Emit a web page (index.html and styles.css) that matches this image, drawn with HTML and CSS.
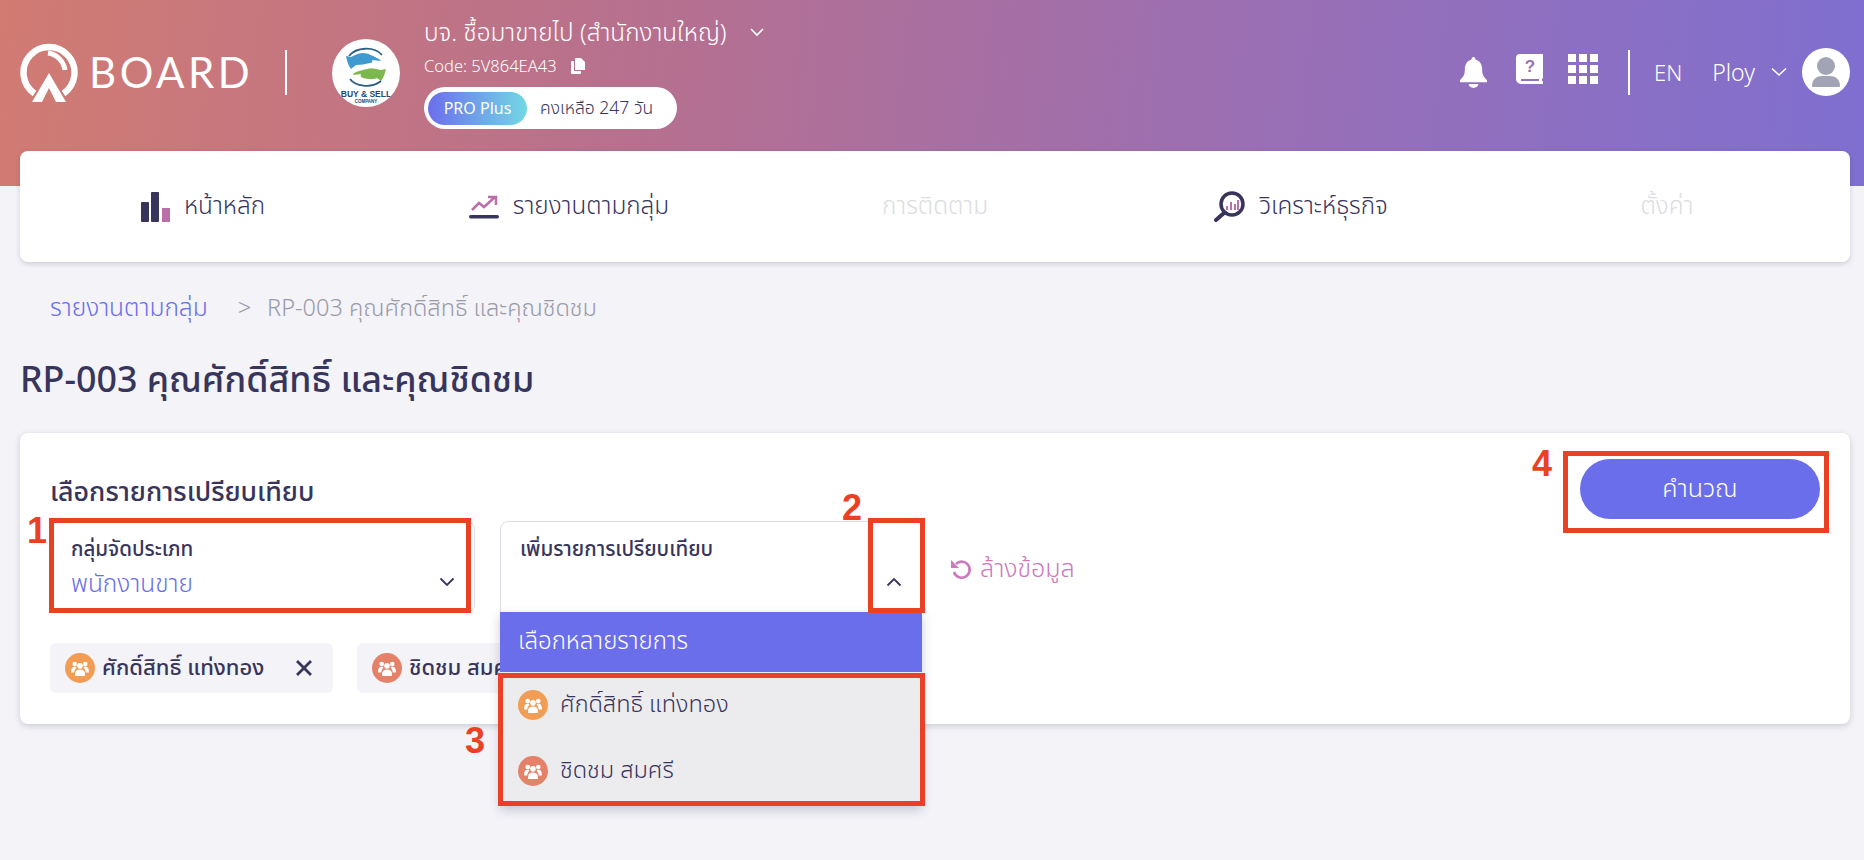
FILE: index.html
```html
<!DOCTYPE html>
<html lang="th">
<head>
<meta charset="utf-8">
<title>RP-003</title>
<link rel="stylesheet" href="styles.css">
</head>
<body>
<div class="page">
  <header class="topbar">
    <div class="brand">
      <svg class="brand-mark" viewBox="0 0 58 60" fill="none"><path d="M14.500 51.500A25.500 25.500 0 1 1 43.500 51.500" stroke="#fff" stroke-width="6.500"/><path d="M29 11a20 20 0 0 1 17 17" stroke="#fff" stroke-width="5" transform="translate(-1 0)"/><path d="M29 31L12 60h10l7-14 7 14h10z" fill="#fff"/></svg>
      <span class="brand-name">BOARD</span>
    </div>
    <span class="vline vline-brand"></span>
    <div class="company-logo">
      <svg viewBox="0 0 68 68"><path d="M17 17C24 8 42 7 50 16" fill="none" stroke="#2c5f86" stroke-width="1.800"/><path d="M14 17l5 1c4-2 8-4 12-4 5 0 10 3 16 6l2 2-9-1c1 2 0 3-2 3-5 1-9 2-14 2l-5 4c-3-4-4-8-5-13z" fill="#3f9ad0"/><path d="M54 30l-5 1c-5-1-9-2-14-1-5 1-9 2-13 4l-1 2 8-1c-1 2 0 3 2 4 5 1 10 2 14 0l4 3c3-4 4-8 5-12z" fill="#7cb84e"/><path d="M18 40c5 7 21 10 31 2" fill="none" stroke="#2c5f86" stroke-width="1.800"/><text x="34" y="58" class="logo-big">BUY &amp; SELL</text><text x="34" y="64" class="logo-small">COMPANY</text></svg>
    </div>
    <div class="company">
      <div class="company-name"><span>บจ. ชื้อมาขายไป (สำนักงานใหญ่)</span>
        <svg class="chev-sm" viewBox="0 0 16 10" fill="none"><path d="M2 2l6 6 6-6" stroke="#fff" stroke-width="1.600"/></svg>
      </div>
      <div class="company-code"><span>Code: 5V864EA43</span>
        <svg class="copy-ic" viewBox="0 0 14 16"><path d="M5 0h5l4 4v8H4V1a1 1 0 0 1 1-1z" fill="#fff"/><path d="M1 3h2v10h7v2a1 1 0 0 1-1 1H1a1 1 0 0 1-1-1V4a1 1 0 0 1 1-1z" fill="#fff"/></svg>
      </div>
      <div class="plan"><span class="plan-tag">PRO Plus</span><span class="plan-left">คงเหลือ 247 วัน</span></div>
    </div>
    <div class="top-actions">
      <svg class="ic-bell" viewBox="0 0 28 32"><path d="M14 0c1.500 0 2 1 2 2.500C21 4 23 8 23 13c0 6 2 8 5 11v2H0v-2c3-3 5-5 5-11 0-5 2-9 7-10.500C12 1 12.500 0 14 0z" fill="#fff"/><path d="M9 28h10a5 4 0 0 1-10 0z" fill="#fff"/></svg>
      <svg class="ic-book" viewBox="0 0 27 30"><path d="M4 0h23v24l-1 1v2h1v3H5a5 5 0 0 1-5-5V4a4 4 0 0 1 4-4z" fill="#fff"/><path d="M5 25h18v2H5z" fill="#9872b6"/><text x="14" y="18" class="book-q">?</text></svg>
      <svg class="ic-grid" viewBox="0 0 30 30" fill="#fff"><rect width="8" height="8"/><rect x="11" width="8" height="8"/><rect x="22" width="8" height="8"/><rect y="11" width="8" height="8"/><rect x="11" y="11" width="8" height="8"/><rect x="22" y="11" width="8" height="8"/><rect y="22" width="8" height="8"/><rect x="11" y="22" width="8" height="8"/><rect x="22" y="22" width="8" height="8"/></svg>
      <span class="vline vline-actions"></span>
      <span class="lang">EN</span>
      <span class="user">Ploy</span>
      <svg class="chev-user" viewBox="0 0 16 10" fill="none"><path d="M1 1.500l7 6.500 7-6.500" stroke="#fff" stroke-width="1.600"/></svg>
      <div class="avatar"><svg viewBox="0 0 48 48"><circle cx="24" cy="18" r="9" fill="#a2a3b4"/><path d="M10 38c0-7 5-10 10-10h8c5 0 10 3 10 10 0 1-1 1-2 1H12c-1 0-2 0-2-1z" fill="#a2a3b4"/></svg></div>
    </div>
  </header>

  <nav class="mainnav">
    <a class="nav-item">
      <svg class="nav-ic-bars" viewBox="0 0 29 30"><rect y="10" width="8" height="20" rx="1" fill="#38355c"/><rect x="10" width="8" height="30" rx="1" fill="#38355c"/><rect x="21" y="16" width="8" height="14" fill="#bb6fa8"/></svg>
      <span>หน้าหลัก</span></a>
    <a class="nav-item">
      <svg class="nav-ic-trend" viewBox="0 0 30 24" fill="none"><path d="M3 15l7-7 5 4 11-10M19 2h8v8" stroke="#bb6fa8" stroke-width="2.500"/><rect y="20" width="30" height="3.500" rx="1.700" fill="#38355c"/></svg>
      <span>รายงานตามกลุ่ม</span></a>
    <a class="nav-item nav-off"><span>การติดตาม</span></a>
    <a class="nav-item">
      <svg class="nav-ic-search" viewBox="0 0 31 31" fill="none"><circle cx="18" cy="13" r="11" stroke="#38355c" stroke-width="3.500"/><path d="M10 22l-8 7" stroke="#38355c" stroke-width="4" stroke-linecap="round"/><path d="M13 15v4M17 11v8M21 13v6M24 9v10" stroke="#bb6fa8" stroke-width="2"/></svg>
      <span>วิเคราะห์ธุรกิจ</span></a>
    <a class="nav-item nav-off"><span>ตั้งค่า</span></a>
  </nav>

  <div class="crumbs"><a class="crumb-link">รายงานตามกลุ่ม</a><span class="crumb-sep">&gt;</span><span class="crumb-now">RP-003 คุณศักดิ์สิทธิ์ และคุณชิดชม</span></div>
  <h1 class="page-title">RP-003 คุณศักดิ์สิทธิ์ และคุณชิดชม</h1>

  <section class="panel">
    <div class="panel-main">
      <h2 class="panel-title">เลือกรายการเปรียบเทียบ</h2>
      <div class="controls">
        <div class="field field-group">
          <div class="field-label">กลุ่มจัดประเภท</div>
          <div class="field-value">พนักงานขาย</div>
          <svg class="field-chev" viewBox="0 0 16 10" fill="none"><path d="M1.500 1.500L8 8l6.500-6.500" stroke="#38355c" stroke-width="1.800"/></svg>
        </div>
        <div class="field field-add">
          <div class="field-label">เพิ่มรายการเปรียบเทียบ</div>
          <svg class="field-chev" viewBox="0 0 16 10" fill="none"><path d="M1.500 8.500L8 2l6.500 6.500" stroke="#38355c" stroke-width="1.800"/></svg>
          <div class="menu">
            <div class="menu-head">เลือกหลายรายการ</div>
            <div class="menu-list">
              <div class="menu-row"><span class="people people-a"><svg viewBox="0 0 20 17" fill="#fff"><circle cx="10" cy="5.500" r="3.200"/><circle cx="4" cy="3.500" r="2.600"/><circle cx="16" cy="3.500" r="2.600"/><path d="M4.500 17v-3c0-3 2-4.500 5.500-4.500s5.500 1.500 5.500 4.500v3z"/><path d="M0 11c0-3 1.500-4.500 4-4.500 1 0 1.500.3 2 1C5 9 3.500 10 3.500 13H0zM20 11c0-3-1.500-4.500-4-4.500-1 0-1.500.3-2 1 1 1.500 2.500 2.500 2.500 5.500H20z"/></svg></span><span>ศักดิ์สิทธิ์ แท่งทอง</span></div>
              <div class="menu-row"><span class="people people-b"><svg viewBox="0 0 20 17" fill="#fff"><circle cx="10" cy="5.500" r="3.200"/><circle cx="4" cy="3.500" r="2.600"/><circle cx="16" cy="3.500" r="2.600"/><path d="M4.500 17v-3c0-3 2-4.500 5.500-4.500s5.500 1.500 5.500 4.500v3z"/><path d="M0 11c0-3 1.500-4.500 4-4.500 1 0 1.500.3 2 1C5 9 3.500 10 3.500 13H0zM20 11c0-3-1.500-4.500-4-4.500-1 0-1.500.3-2 1 1 1.500 2.500 2.500 2.500 5.500H20z"/></svg></span><span>ชิดชม สมศรี</span></div>
            </div>
          </div>
        </div>
        <a class="clear"><svg class="clear-ic" viewBox="0 0 22 22" fill="none"><path d="M6 6a8 8 0 1 1-2 8" stroke="#cc79bd" stroke-width="2.600"/><path d="M1 2v8h8z" fill="#cc79bd"/></svg><span>ล้างข้อมูล</span></a>
      </div>
      <div class="chips">
        <div class="chip"><span class="people people-a"><svg viewBox="0 0 20 17" fill="#fff"><circle cx="10" cy="5.500" r="3.200"/><circle cx="4" cy="3.500" r="2.600"/><circle cx="16" cy="3.500" r="2.600"/><path d="M4.500 17v-3c0-3 2-4.500 5.500-4.500s5.500 1.500 5.500 4.500v3z"/><path d="M0 11c0-3 1.500-4.500 4-4.500 1 0 1.500.3 2 1C5 9 3.500 10 3.500 13H0zM20 11c0-3-1.500-4.500-4-4.500-1 0-1.500.3-2 1 1 1.500 2.500 2.500 2.500 5.500H20z"/></svg></span><span class="chip-text">ศักดิ์สิทธิ์ แท่งทอง</span><svg class="chip-x" viewBox="0 0 18 18" fill="none"><path d="M2 2l14 14M16 2L2 16" stroke="#38355c" stroke-width="2.800"/></svg></div>
        <div class="chip"><span class="people people-b"><svg viewBox="0 0 20 17" fill="#fff"><circle cx="10" cy="5.500" r="3.200"/><circle cx="4" cy="3.500" r="2.600"/><circle cx="16" cy="3.500" r="2.600"/><path d="M4.500 17v-3c0-3 2-4.500 5.500-4.500s5.500 1.500 5.500 4.500v3z"/><path d="M0 11c0-3 1.500-4.500 4-4.500 1 0 1.500.3 2 1C5 9 3.500 10 3.500 13H0zM20 11c0-3-1.500-4.500-4-4.500-1 0-1.500.3-2 1 1 1.500 2.500 2.500 2.500 5.500H20z"/></svg></span><span class="chip-text">ชิดชม สมศรี</span><svg class="chip-x" viewBox="0 0 18 18" fill="none"><path d="M2 2l14 14M16 2L2 16" stroke="#38355c" stroke-width="2.800"/></svg></div>
      </div>
    </div>
    <button class="calc">คำนวณ</button>
  </section>

  <div class="mark mark-box-1"></div>
  <div class="mark mark-box-2"></div>
  <div class="mark mark-box-3"></div>
  <div class="mark mark-box-4"></div>
  <span class="mark-num num-1">1</span>
  <span class="mark-num num-2">2</span>
  <span class="mark-num num-3">3</span>
  <span class="mark-num num-4">4</span>
</div>
</body>
</html>
```
FILE: styles.css
```css
* { box-sizing: border-box; }
html, body { margin: 0; padding: 0; }
body { background: #f3f3f8; color: #38355c; font-family: "Noto Sans", "Noto Sans Thai", sans-serif; font-weight: 300; }
.page { position: relative; width: 1864px; height: 860px; overflow: hidden; }
a { text-decoration: none; color: inherit; }

/* top bar */
.topbar { display: flex; align-items: flex-start; height: 186px; padding: 0 14px 0 20px; color: #fff;
  background: linear-gradient(96deg, #d17b72 0%, #b6708f 35%, #9c6fb2 65%, #7f6fd0 100%); }
.brand { display: flex; align-items: center; margin-top: 42px; width: 230px; }
.brand-mark { width: 58px; height: 60px; flex: none; }
.brand-name { margin-left: 11px; font-family: "Lato", sans-serif; font-weight: 400; font-size: 42px; letter-spacing: 3.500px; line-height: 60px; }
.vline { display: block; width: 2px; height: 45px; background: #fff; flex: none; }
.vline-brand { margin: 50px 0 0 35px; }
.company-logo { width: 68px; height: 68px; margin: 39px 0 0 45px; border-radius: 50%; background: #fff; flex: none; overflow: hidden; }
.company-logo svg { display: block; width: 68px; height: 68px; }
.logo-big { font: 700 8.500px "Liberation Sans", sans-serif; fill: #21497a; text-anchor: middle; }
.logo-small { font: 700 4.500px "Liberation Sans", sans-serif; fill: #21497a; text-anchor: middle; }
.company { margin: 17px 0 0 24px; }
.company-name { display: flex; align-items: center; gap: 22px; font-size: 24.300px; line-height: 30px; height: 30px; }
.chev-sm { width: 16px; height: 10px; }
.company-code { display: flex; align-items: center; gap: 14px; font-size: 16.500px; line-height: 22px; margin-top: 8px; }
.copy-ic { width: 14px; height: 16px; }
.plan { display: flex; align-items: center; width: 253px; height: 42px; margin-top: 10px; padding: 0 4px; background: #fff; border-radius: 21px; color: #38355c; font-size: 17.500px; font-weight: 400; }
.plan-tag { width: 99px; height: 33px; line-height: 33px; font-size: 16px; text-align: center; color: #fff; border-radius: 17px; background: linear-gradient(90deg, #6c6eec, #72d8e4); }
.plan-left { margin-left: 13px; font-weight: 300; }
.top-actions { display: flex; align-items: center; margin: 48px 0 0 auto; height: 48px; }
.ic-bell { width: 27px; height: 31px; }
.ic-book { width: 27px; height: 30px; margin: -6px 0 0 29px; }
.book-q { font: 700 17px "Liberation Sans", sans-serif; fill: #9872b6; text-anchor: middle; }
.ic-grid { width: 30px; height: 30px; margin: -6px 0 0 25px; }
.vline-actions { margin-left: 30px; }
.lang { margin-left: 24px; font-size: 22px; }
.user { margin-left: 30px; font-size: 23px; }
.chev-user { width: 16px; height: 10px; margin-left: 16px; }
.avatar { width: 48px; height: 48px; margin-left: 15px; border-radius: 50%; background: #fff; overflow: hidden; }
.avatar svg { display: block; }

/* nav */
.mainnav { display: flex; height: 111px; margin: -35px 14px 0 20px; background: #fff; border-radius: 8px; box-shadow: 0 2px 5px rgba(60, 60, 90, .2); position: relative; }
.nav-item { flex: 1; display: flex; align-items: center; justify-content: center; gap: 14px; font-size: 24.300px; color: #38355c; }
.nav-off { color: #dcdce2; }
.nav-ic-bars { width: 29px; height: 30px; }
.nav-ic-trend { width: 30px; height: 24px; }
.nav-ic-search { width: 31px; height: 31px; }

/* heading */
.crumbs { display: flex; margin: 30px 0 0 50px; font-size: 23.500px; line-height: 30px; color: #9a9aa8; }
.crumb-link { color: #6a6eea; font-size: 24.500px; }
.crumb-sep { margin: 0 16px 0 30px; }
.page-title { margin: 33px 0 0 20px; font-size: 35.800px; line-height: 46px; font-weight: 500; color: #38355c; }

/* panel */
.panel { display: flex; align-items: flex-start; height: 291px; margin: 32px 14px 0 20px; padding: 30px; background: #fff; border-radius: 8px; box-shadow: 0 2px 6px rgba(60, 60, 90, .22); }
.panel-main { flex: 1; min-width: 0; }
.panel-title { margin: 0; font-size: 26.800px; line-height: 56px; height: 58px; font-weight: 500; color: #38355c; }
.controls { display: flex; align-items: flex-start; gap: 25px; }
.field { position: relative; width: 425px; height: 92px; padding: 12px 19px; background: #fff; border: 1px solid #dddde8; border-radius: 8px; }
.field-add { width: 422px; border-bottom-left-radius: 0; border-bottom-right-radius: 0; }
.field-group { padding-left: 20px; }
.field-label { font-size: 20.500px; line-height: 28px; font-weight: 500; color: #38355c; }
.field-value { font-size: 24.500px; line-height: 34px; margin-top: 4px; color: #6a6eea; }
.field-chev { position: absolute; right: 19px; top: 55px; width: 16px; height: 10px; }
.menu { position: absolute; left: -1px; right: -1px; top: 90px; z-index: 3; background: #ececee; box-shadow: 0 4px 10px rgba(60, 60, 90, .25); }
.menu-head { height: 60px; padding-left: 18px; line-height: 56px; font-size: 24px; color: #fff; background: #6a6eea; }
.menu-list { padding: 18px 18px 20px; }
.menu-row { display: flex; align-items: center; gap: 12px; height: 30px; font-size: 23.500px; margin-bottom: 36px; }
.menu-row:last-child { margin-bottom: 0; }
.people { display: flex; align-items: center; justify-content: center; width: 30px; height: 30px; border-radius: 50%; flex: none; }
.people svg { width: 18px; height: 15px; }
.people-a { background: #f29d55; }
.people-b { background: #e58169; }
.clear { display: flex; align-items: center; gap: 8px; margin: 29px 0 0 3px; font-size: 25px; color: #cc79bd; }
.clear-ic { width: 22px; height: 22px; }
.chips { display: flex; gap: 24px; margin-top: 30px; }
.chip { display: flex; align-items: center; width: 283px; height: 50px; padding: 0 15px; border-radius: 6px; background: #f3f3f8; font-size: 22px; font-weight: 500; }
.chip-text { margin-left: 7px; flex: 1; }
.chip-x { width: 18px; height: 18px; margin-right: 5px; }
.calc { width: 240px; height: 60px; margin-top: -4px; border: 0; border-radius: 30px; background: #6a6eea; color: #fff; font: inherit; font-size: 25px; }

/* annotation overlays */
.mark { position: absolute; z-index: 5; border: 5px solid #ea4125; }
.mark-box-1 { left: 49px; top: 518px; width: 422px; height: 95px; }
.mark-box-2 { left: 868px; top: 518px; width: 57px; height: 95px; }
.mark-box-3 { left: 498px; top: 673px; width: 427px; height: 133px; }
.mark-box-4 { left: 1563px; top: 451px; width: 266px; height: 82px; }
.mark-num { position: absolute; z-index: 6; font: 700 36px/36px "Liberation Sans", sans-serif; color: #ea4125; }
.num-1 { left: 27px; top: 513px; }
.num-2 { left: 842px; top: 490px; }
.num-3 { left: 465px; top: 723px; }
.num-4 { left: 1532px; top: 446px; }
```
